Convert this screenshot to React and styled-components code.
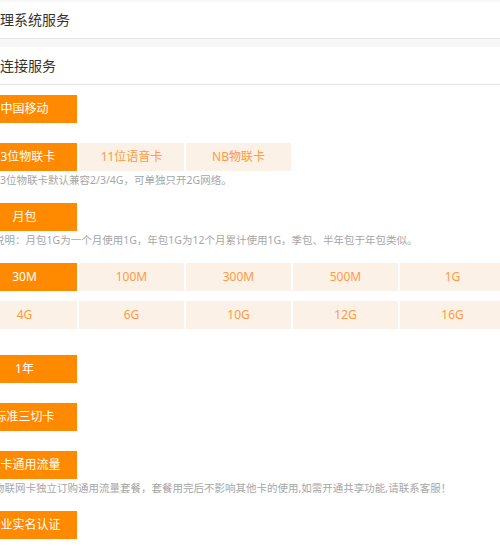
import React from "react";
import styled, { createGlobalStyle } from "styled-components";

const GlobalStyle = createGlobalStyle`
  body {
    margin: 0;
    background: #ffffff;
    overflow: hidden;
    font-family: "Noto Sans", "Noto Sans CJK SC", sans-serif;
  }
`;

const groups = [
  { options: ["中国移动"], active: 0 },
  {
    options: ["13位物联卡", "11位语音卡", "NB物联卡"],
    active: 0,
    note: "13位物联卡默认兼容2/3/4G，可单独只开2G网络。",
  },
  {
    options: ["月包"],
    active: 0,
    note: "说明：月包1G为一个月使用1G，年包1G为12个月累计使用1G，季包、半年包于年包类似。",
  },
  {
    options: ["30M", "100M", "300M", "500M", "1G", "4G", "6G", "10G", "12G", "16G"],
    active: 0,
    extra: 6,
  },
  { options: ["1年"], active: 0 },
  { options: ["标准三切卡"], active: 0 },
  {
    options: ["单卡通用流量"],
    active: 0,
    note: "物联网卡独立订购通用流量套餐，套餐用完后不影响其他卡的使用,如需开通共享功能,请联系客服！",
  },
  { options: ["企业实名认证"], active: 0 },
];

function App() {
  return (
    <>
      <GlobalStyle />
      <Page>
        <TopBand />
        <Header>管理系统服务</Header>
        <Spacer />
        <Header $tall>网连接服务</Header>
        <Content>
          {groups.map((group, i) => (
            <Group key={i} $extra={group.extra || 0}>
              <Options>
                {group.options.map((label, j) => (
                  <Option key={label} $active={j === group.active}>
                    {label}
                  </Option>
                ))}
              </Options>
              {group.note && <Note>{group.note}</Note>}
            </Group>
          ))}
        </Content>
      </Page>
    </>
  );
}
export default App;

const Page = styled.div`
  margin-left: -28px;
  width: 620px;
`;

const TopBand = styled.div`
  height: 2px;
  background: #f7f7f7;
`;

const Spacer = styled.div`
  height: 8px;
  background: #f7f7f7;
`;

const Header = styled.div`
  height: ${(props) => (props.$tall ? "37px" : "36px")};
  line-height: ${(props) => (props.$tall ? "37px" : "36px")};
  padding-left: 14px;
  font-size: 14px;
  color: #333333;
  background: #ffffff;
  border-bottom: 1px solid #e6e6e6;
`;

const Content = styled.div`
  padding-top: 10px;
`;

const Group = styled.div`
  margin-bottom: ${(props) => 20 + props.$extra}px;
`;

const Options = styled.div`
  display: grid;
  grid-template-columns: repeat(5, 105px);
  column-gap: 2px;
  row-gap: 10px;
`;

const Option = styled.div`
  height: 28px;
  line-height: 28px;
  text-align: center;
  font-size: 12px;
  color: ${(props) => (props.$active ? "#ffffff" : "#ff9a45")};
  background: ${(props) => (props.$active ? "#ff8a00" : "#fbf1e6")};
  white-space: nowrap;
`;

const Note = styled.div`
  margin: 3px 0 -3px 22px;
  line-height: 12px;
  font-size: 10.5px;
  color: #a6a6a6;
  white-space: nowrap;
`;
